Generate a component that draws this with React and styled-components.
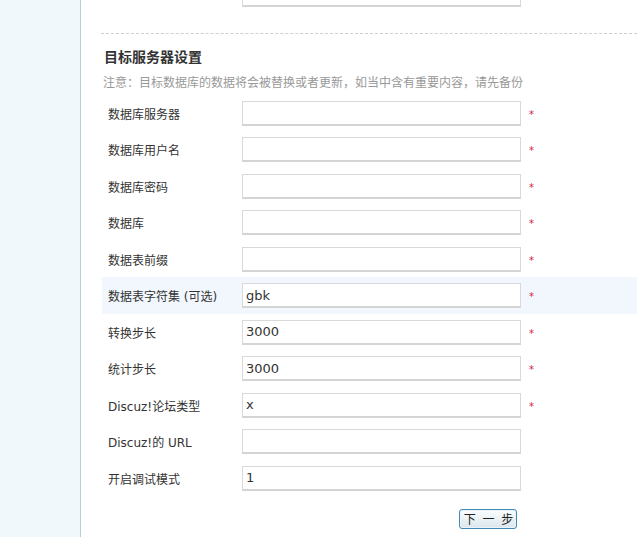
import React from "react";
import styled, { createGlobalStyle } from "styled-components";

const GlobalStyle = createGlobalStyle`
    html, body {
        margin: 0;
        padding: 0;
        background: #fff;
    }
    body {
        font-family: "DejaVu Sans", "Noto Sans CJK SC", sans-serif;
        font-size: 12px;
        color: #333;
    }
`;

const Page = styled.div`
    display: flex;
    width: 637px;
    height: 537px;
    overflow: hidden;
`;

const Sidebar = styled.div`
    width: 80px;
    flex-shrink: 0;
    background-color: #f1f8fc;
    border-right: 1px solid #b9ccd8;
`;

const Main = styled.div`
    flex: 1;
    display: flex;
    flex-direction: column;
    padding-left: 20px;
`;

const PrevField = styled.div`
    height: 7px;
    overflow: hidden;
    display: flex;
    align-items: flex-end;
    padding-left: 141px;
`;

const Divider = styled.div`
    margin-top: 26px;
    border-top: 1px dashed #cfcfcf;
`;

const Title = styled.h3`
    margin: 12px 0 0 3px;
    font-size: 14px;
    line-height: 20px;
    font-weight: bold;
    color: #333;
    font-family: "Noto Sans CJK SC", sans-serif;
`;

const Notice = styled.p`
    margin: 8px 0 0 2px;
    font-size: 12px;
    line-height: 16px;
    color: #999;
    font-family: "Noto Sans CJK SC", sans-serif;
`;

const Form = styled.div`
    margin-top: 4.75px;
    display: flex;
    flex-direction: column;
`;

const Row = styled.div`
    display: flex;
    align-items: center;
    height: 36.5px;
    margin-left: 1px;
    background-color: ${(p) => (p.$active ? "#f1f7fc" : "transparent")};
`;

const Label = styled.div`
    width: 134px;
    padding-left: 6px;
    flex-shrink: 0;
    font-family: "DejaVu Sans", "Noto Sans CJK SC", sans-serif;
    font-size: 12px;
    color: #333;
    white-space: nowrap;
`;

const Input = styled.input`
    box-sizing: border-box;
    width: 279px;
    height: 25px;
    margin: 0;
    padding: 0 3px;
    border: 1px solid #d9d9d9;
    border-bottom: 2px solid #d4d4d4;
    background: #fff;
    font-family: "DejaVu Sans", sans-serif;
    font-size: 13px;
    color: #333;
    outline: none;
`;

const Required = styled.span`
    margin-left: 8px;
    margin-top: 2px;
    color: #d4204a;
    font-size: 10px;
    font-family: "DejaVu Sans", sans-serif;
`;

const Actions = styled.div`
    display: flex;
    margin-top: 12.75px;
    padding-left: 358px;
`;

const Button = styled.button`
    width: 58px;
    height: 20px;
    padding: 0 0 0 3px;
    border: 1px solid #3f8ab6;
    border-radius: 3px;
    background: linear-gradient(#fbfdfe, #dbe6ec);
    box-shadow: inset 0 0 0 1px #e9f3f8;
    font-family: "Noto Sans CJK SC", sans-serif;
    font-size: 12px;
    line-height: 16px;
    letter-spacing: 2px;
    white-space: pre;
    color: #222;
    cursor: pointer;
`;

const fields = [
    { label: "数据库服务器", value: "", required: true },
    { label: "数据库用户名", value: "", required: true },
    { label: "数据库密码", value: "", required: true },
    { label: "数据库", value: "", required: true },
    { label: "数据表前缀", value: "", required: true },
    { label: "数据表字符集 (可选)", value: "gbk", required: true, active: true },
    { label: "转换步长", value: "3000", required: true },
    { label: "统计步长", value: "3000", required: true },
    { label: "Discuz!论坛类型", value: "x", required: true },
    { label: "Discuz!的 URL", value: "", required: false },
    { label: "开启调试模式", value: "1", required: false },
];

const App = () => {
    return (
        <Page>
            <GlobalStyle />
            <Sidebar />
            <Main>
                <PrevField>
                    <Input readOnly defaultValue="" />
                </PrevField>
                <Divider />
                <Title>目标服务器设置</Title>
                <Notice>
                    注意：目标数据库的数据将会被替换或者更新，如当中含有重要内容，请先备份
                </Notice>
                <Form>
                    {fields.map((f) => (
                        <Row key={f.label} $active={f.active}>
                            <Label>{f.label}</Label>
                            <Input defaultValue={f.value} />
                            {f.required && <Required>*</Required>}
                        </Row>
                    ))}
                </Form>
                <Actions>
                    <Button>下 一 步</Button>
                </Actions>
            </Main>
        </Page>
    );
};

export default App;
